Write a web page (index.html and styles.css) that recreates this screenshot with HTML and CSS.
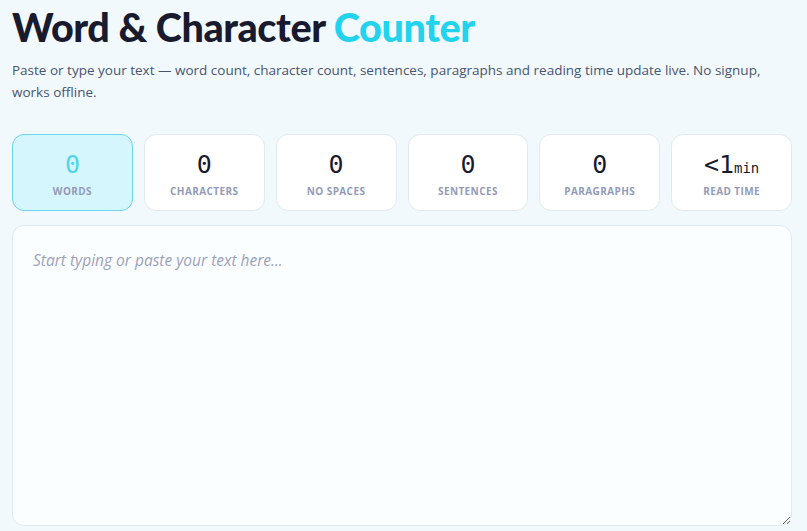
FILE: index.html
```html
<!DOCTYPE html>
<html lang="en">
<head>
    <meta charset="UTF-8">
    <meta name="viewport" content="width=device-width, initial-scale=1.0">
    <title>Word &amp; Character Counter</title>
    <link rel="stylesheet" href="styles.css">
</head>
<body>
    <div class="wrap">
        <h1>Word &amp; Character <span class="accent">Counter</span></h1>
        <p class="lead">Paste or type your text — word count, character count, sentences, paragraphs and reading time update live. No signup, works offline.</p>

        <!-- live stats -->
        <div class="stats">
            <div class="stat active">
                <div class="num" id="words">0</div>
                <div class="label">Words</div>
            </div>
            <div class="stat">
                <div class="num" id="chars">0</div>
                <div class="label">Characters</div>
            </div>
            <div class="stat">
                <div class="num" id="nospace">0</div>
                <div class="label">No spaces</div>
            </div>
            <div class="stat">
                <div class="num" id="sentences">0</div>
                <div class="label">Sentences</div>
            </div>
            <div class="stat">
                <div class="num" id="paras">0</div>
                <div class="label">Paragraphs</div>
            </div>
            <div class="stat">
                <div class="num" id="read">&lt;1<small>min</small></div>
                <div class="label">Read time</div>
            </div>
        </div>

        <textarea id="text" placeholder="Start typing or paste your text here..."></textarea>
    </div>
</body>
</html>
```

FILE: styles.css
```css
body {
    margin: 0;
    background-color: #f1f9fc;
    font-family: "Open Sans", "Noto Sans", sans-serif;
    color: #1a1a2e;
}
.wrap {
    width: 780px;
    padding: 0 12px;
}
h1 {
    margin: 0;
    padding-top: 4px;
    font-family: Lato, sans-serif;
    font-weight: 900;
    font-size: 39.5px;
    line-height: 46px;
    letter-spacing: -0.4px;
    color: #1a1a2e;
}
.accent {
    color: #22d3ee;
}
.lead {
    margin: 9px 0 0;
    font-size: 13.5px;
    line-height: 22px;
    color: #4a5470;
}
.stats {
    display: grid;
    grid-template-columns: repeat(6, 1fr);
    gap: 11px;
    margin-top: 31px;
}
.stat {
    height: 75px;
    background: #fff;
    border: 1px solid #e1eaf0;
    border-radius: 12px;
    text-align: center;
}
.stat.active {
    background: #d6f6fd;
    border-color: #67d8f0;
}
.num {
    margin-top: 15px;
    font-family: "DejaVu Sans Mono", monospace;
    font-size: 25px;
    line-height: 30px;
    color: #1a1a2e;
}
.num small {
    font-size: 14px;
    line-height: 1;
}
.stat.active .num {
    color: #4fd6ee;
}
.label {
    margin-top: 4px;
    font-size: 10px;
    font-weight: 700;
    letter-spacing: 0.4px;
    text-transform: uppercase;
    color: #929bb7;
}
textarea {
    display: block;
    box-sizing: border-box;
    width: 100%;
    height: 301px;
    margin-top: 14px;
    padding: 22px 20px;
    background: #fbfeff;
    border: 1px solid #e1eaf0;
    border-radius: 12px;
    font-family: "Open Sans", "Noto Sans", sans-serif;
    font-size: 15.5px;
    line-height: 24px;
    color: #1a1a2e;
    outline: none;
}
textarea::placeholder {
    font-style: italic;
    color: #9ba1bd;
}
```
